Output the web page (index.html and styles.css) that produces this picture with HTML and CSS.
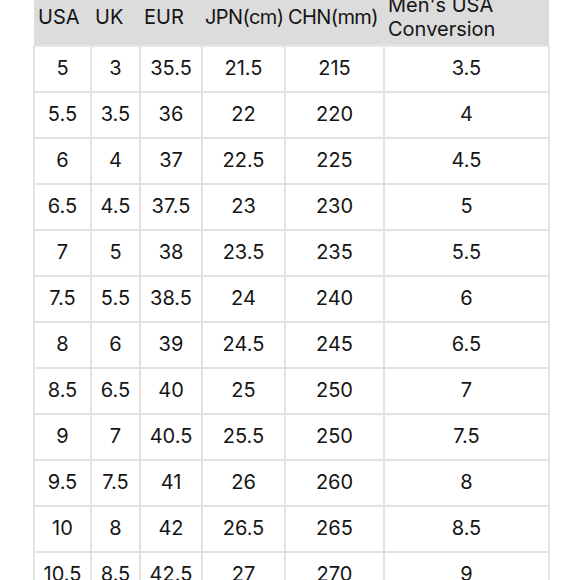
FILE: index.html
```html
<!DOCTYPE html>
<html>
<head>
<meta charset="utf-8">
<link rel="stylesheet" href="styles.css">
</head>
<body>
<div class="wrap">
<table class="sizes">
<colgroup>
<col class="c1"><col class="c2"><col class="c3"><col class="c4"><col class="c5"><col class="c6">
</colgroup>
<thead>
<tr><th>USA</th><th>UK</th><th>EUR</th><th class="tight">JPN(cm)</th><th class="tight">CHN(mm)</th><th>Men's USA<br>Conversion</th></tr>
</thead>
<tbody>
<tr><td>5</td><td>3</td><td>35.5</td><td>21.5</td><td>215</td><td>3.5</td></tr>
<tr><td>5.5</td><td>3.5</td><td>36</td><td>22</td><td>220</td><td>4</td></tr>
<tr><td>6</td><td>4</td><td>37</td><td>22.5</td><td>225</td><td>4.5</td></tr>
<tr><td>6.5</td><td>4.5</td><td>37.5</td><td>23</td><td>230</td><td>5</td></tr>
<tr><td>7</td><td>5</td><td>38</td><td>23.5</td><td>235</td><td>5.5</td></tr>
<tr><td>7.5</td><td>5.5</td><td>38.5</td><td>24</td><td>240</td><td>6</td></tr>
<tr><td>8</td><td>6</td><td>39</td><td>24.5</td><td>245</td><td>6.5</td></tr>
<tr><td>8.5</td><td>6.5</td><td>40</td><td>25</td><td>250</td><td>7</td></tr>
<tr><td>9</td><td>7</td><td>40.5</td><td>25.5</td><td>250</td><td>7.5</td></tr>
<tr><td>9.5</td><td>7.5</td><td>41</td><td>26</td><td>260</td><td>8</td></tr>
<tr><td>10</td><td>8</td><td>42</td><td>26.5</td><td>265</td><td>8.5</td></tr>
<tr><td>10.5</td><td>8.5</td><td>42.5</td><td>27</td><td>270</td><td>9</td></tr>
</tbody>
</table>
</div>
</body>
</html>
```

FILE: styles.css
```css
html, body {
  margin: 0;
  padding: 0;
  background: #ffffff;
  overflow: hidden;
}
.wrap {
  height: 580px;
  overflow: hidden;
  padding-left: 33px;
}
.sizes {
  margin-top: -11px;
  border-collapse: collapse;
  table-layout: fixed;
  width: 515px;
  font-family: Inter, "Noto Sans", sans-serif;
  font-size: 20px;
  color: #151515;
}
.c1 { width: 57px; }
.c2 { width: 49px; }
.c3 { width: 62px; }
.c4 { width: 83px; }
.c5 { width: 99px; }
.c6 { width: 165px; }
.sizes th {
  background: #dcdcdc;
  font-weight: 400;
  text-align: left;
  height: 56px;
  padding: 0 0 0 4px;
  line-height: 24px;
  white-space: nowrap;
  border-bottom: 2px solid #e6e6e6;
}
.sizes th.tight {
  letter-spacing: -0.6px;
  padding-left: 3px;
}
.sizes td {
  height: 46px;
  padding: 0 0 3px 0;
  text-align: center;
  border: 2px solid #e2e2e2;
  box-sizing: border-box;
}
```
